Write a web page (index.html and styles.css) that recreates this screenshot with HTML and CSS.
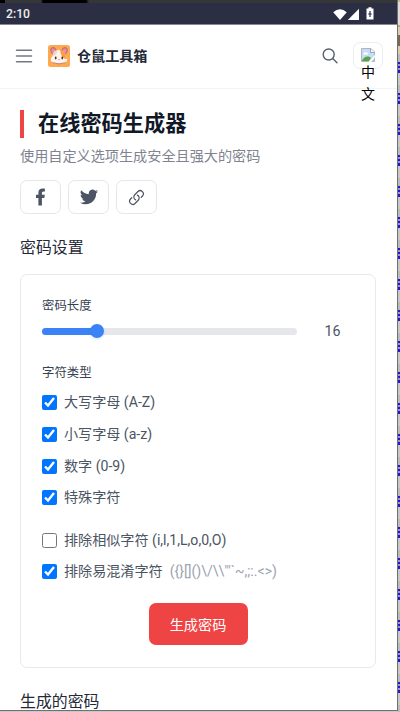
FILE: index.html
```html
<!DOCTYPE html>
<html lang="zh-CN">
<head>
<meta charset="utf-8">
<title>在线密码生成器</title>
<link rel="stylesheet" href="styles.css">
</head>
<body>
<div class="desktop">
<div class="phone">
  <div class="bezel"></div>
  <div class="status">
    <span>2:10</span>
    <svg class="status-icons" width="42" height="16" viewBox="0 0 42 16" fill="#fff">
      <path d="M0.2 5.2Q7 -.8 13.8 5.2L7 13Z"/>
      <path d="M26 1.8V13H14.8Z"/>
      <path d="M34 .7h3v1.3h2v11h-7V2h2Z" transform="translate(1.500 -.5)"/>
      <path d="M37 4v6M35.200 7h3.6" stroke="#2c2e44" stroke-width="1.2"/>
    </svg>
  </div>
  <header class="header">
    <svg class="menu" width="18" height="14" viewBox="0 0 18 14" fill="none" stroke="#727985" stroke-width="1.5" stroke-linecap="round"><path d="M1.5 1.2h15M1.5 7h15M1.5 12.800h15"/></svg>
    <svg class="logo" width="22" height="22" viewBox="0 0 22 22">
      <rect width="22" height="22" rx="2.5" fill="#ffa84f"/>
      <ellipse cx="5.7" cy="6" rx="3.2" ry="4" fill="#b5757c" transform="rotate(-25 5.7 6)"/>
      <ellipse cx="16.3" cy="6" rx="3.2" ry="4" fill="#b5757c" transform="rotate(25 16.3 6)"/>
      <ellipse cx="5.8" cy="6.3" rx="2" ry="3" fill="#f48b9c" transform="rotate(-25 5.8 6.3)"/>
      <ellipse cx="16.2" cy="6.3" rx="2" ry="3" fill="#f48b9c" transform="rotate(25 16.2 6.3)"/>
      <path d="M11 5C6 5 5 9 4.5 11 2.5 13 2 15.5 4 17.3c3 2 11 2 14 0 2-1.8 1.5-4.3-.5-6.300C17 9 16 5 11 5Z" fill="#fff5ec"/>
      <path d="M12 5c4 .1 5 3.500 5.500 6 .9 1 1.300 2 1.300 3-2.800 0-5.800-2-6.800-9Z" fill="#ff9c3c"/>
      <path d="M4.500 11C5 8 6.500 5.500 9.500 5.100 9.500 8 8 11 4.500 11Z" fill="#eed8ca"/>
      <ellipse cx="7.700" cy="13" rx=".9" ry="1.400" fill="#483139"/>
      <ellipse cx="14.300" cy="13" rx=".9" ry="1.400" fill="#483139"/>
      <path d="M10 14.300h2l-1 1.200Z" fill="#e95f73"/>
      <path d="M4.500 17.700q6.500 2.300 13 0" fill="none" stroke="#a66b68" stroke-width=".8"/>
    </svg>
    <span class="brand">仓鼠工具箱</span>
    <svg class="search" width="16" height="16" viewBox="0 0 16 16" fill="none" stroke="#556070" stroke-width="1.400" stroke-linecap="round"><circle cx="6.700" cy="6.500" r="5.500"/><path d="m10.700 10.500 4.300 4.300"/></svg>
    <div class="lang">
      <svg width="14" height="14" viewBox="0 0 14 14">
        <path d="M.5.500h9.500l3.500 3.500v9.500H.5Z" fill="#c7dcf9" stroke="#b1b5b9"/>
        <path d="M2.500 5.500q1-2.500 3-1 2 0 1.500 2h-5Z" fill="#fff"/>
        <path d="M1 13c1-4 6-6 9-3l-2 3Z" fill="#55a73f"/>
        <path d="M9.500.500V4.500h4" fill="#f4f5f7" stroke="#9da3a8"/>
        <path d="M7.500 14 14 7v2l-4 5Z" fill="#fff"/><path d="m11 14 3-4v4Z" fill="#b4bdc6"/>
      </svg>
      <span>中</span><span>文</span>
    </div>
  </header>
  <main class="content">
    <h1>在线密码生成器</h1>
    <p class="intro">使用自定义选项生成安全且强大的密码</p>
    <div class="shares">
      <a class="share"><svg width="18" height="18" viewBox="0 0 18 18" fill="#4b5563"><path d="M6.400 17.500V10.100H4V6.800h2.400V4.500C6.400 1.900 8 .500 10.700.500c1.100 0 2.200.2 2.200.2v2.700h-1.400c-1.300 0-1.600.8-1.600 1.600v1.800h2.900l-.5 3.300H9.900v7.400Z"/></svg></a>
      <a class="share"><svg width="18" height="18" viewBox="0 0 24 24" fill="#4b5563"><path d="M23.950 4.570a10 10 0 0 1-2.820.770 4.960 4.960 0 0 0 2.160-2.720c-.950.550-2 .950-3.120 1.180a4.920 4.920 0 0 0-8.380 4.480C7.690 8.090 4.070 6.130 1.640 3.160a4.920 4.920 0 0 0 1.520 6.570 4.900 4.900 0 0 1-2.230-.610v.060a4.920 4.920 0 0 0 3.950 4.830 5 5 0 0 1-2.210.080 4.940 4.940 0 0 0 4.600 3.420A9.870 9.870 0 0 1 0 19.540 13.990 13.990 0 0 0 7.550 21.750c9.050 0 14-7.500 14-13.980 0-.210 0-.420-.010-.630a9.940 9.940 0 0 0 2.410-2.570Z"/></svg></a>
      <a class="share"><svg width="17" height="17" viewBox="0 0 24 24" fill="none" stroke="#4b5563" stroke-width="1.700" stroke-linecap="round" stroke-linejoin="round"><path d="M13.190 8.690a4.500 4.500 0 0 1 1.240 7.240l-4.500 4.500a4.500 4.500 0 0 1-6.360-6.360l1.750-1.760m13.360-.620 1.750-1.760a4.500 4.500 0 0 0-6.360-6.360l-4.500 4.500a4.500 4.500 0 0 0 1.240 7.240"/></svg></a>
    </div>
    <h2>密码设置</h2>
    <section class="card">
      <div class="label">密码长度</div>
      <div class="range"><div class="track"><div class="fill"></div><div class="thumb"></div></div><span class="value">16</span></div>
      <div class="label types">字符类型</div>
      <div class="options">
        <label><input type="checkbox" checked>大写字母 (A-Z)</label>
        <label><input type="checkbox" checked>小写字母 (a-z)</label>
        <label><input type="checkbox" checked>数字 (0-9)</label>
        <label><input type="checkbox" checked>特殊字符</label>
      </div>
      <div class="options exclude">
        <label><input type="checkbox">排除相似字符 (i,l,1,L,o,0,O)</label>
        <label><input type="checkbox" checked>排除易混淆字符<span class="symbols">({}[]()\/\\'"`~,;:.&lt;&gt;)</span></label>
      </div>
      <button class="generate">生成密码</button>
    </section>
    <h2 class="result">生成的密码</h2>
  </main>
</div>
<div class="strip"></div>
</div>
</body>
</html>
```
FILE: styles.css
```css
* { box-sizing: border-box; }
body { margin: 0; font-family: Roboto, "Noto Sans CJK SC", sans-serif; }
.desktop { display: flex; width: 400px; height: 712px; overflow: hidden; background: #c8c8c8; }
.phone { width: 398px; height: 711px; overflow: hidden; background: #fff; border-right: 1px solid #707073; border-bottom: 1px solid #707073; }
.bezel { height: 3px; background: linear-gradient(90deg, #000 5px, #353638 5px 41px, #000 43px 86px, #353638 89px); }
.status { display: flex; justify-content: space-between; height: 22px; padding: 0 22px 0 6px; background: #2c2e44; border-bottom: 1px solid #888795; color: #eee; font-size: 12.2px; font-weight: 500; line-height: 23px; }
.status-icons { margin-top: 4px; }
.header { display: flex; align-items: center; height: 64px; padding: 0 14px 2px 15px; border-bottom: 1px solid #f3f4f6; }
.menu { flex: none; }
.logo { margin-left: 15px; flex: none; }
.brand { margin-left: 7px; color: #1f2937; font-size: 14.1px; font-weight: 700; line-height: 20px; }
.search { margin-left: auto; margin-right: 15px; flex: none; }
.lang { display: flex; flex-direction: column; align-items: center; width: 30px; height: 27px; padding-top: 5px; border: 1px solid #edeef0; border-radius: 7px; color: #000; font-size: 14px; line-height: 21.5px; }
.lang svg { flex: none; }
.content { padding: 21px 21px 0 20px; }
h1 { margin: 0; height: 28px; padding-left: 14px; border-left: 4px solid #ef4444; color: #111827; font-size: 21.2px; font-weight: 700; line-height: 28px; }
.intro { margin: 8px 0 0; color: #808490; font-size: 14.15px; line-height: 21px; }
.shares { display: flex; gap: 7px; margin-top: 13px; }
.share { display: flex; align-items: center; justify-content: center; width: 41px; height: 34px; border: 1px solid #e5e7eb; border-radius: 7px; }
h2 { margin: 21px 0 0; color: #1f2937; font-size: 15.9px; font-weight: 400; line-height: 26px; }
.card { height: 394px; margin-top: 13px; padding: 21px; border: 1px solid #e8e9ed; border-radius: 7px; }
.label { color: #374151; font-size: 12.4px; line-height: 19px; }
.range { display: flex; align-items: center; height: 17px; margin-top: 8px; }
.track { position: relative; width: 255px; height: 7px; border-radius: 4px; background: #e5e7eb; }
.fill { width: 55px; height: 7px; border-radius: 4px; background: #3b82f6; }
.thumb { position: absolute; left: 48px; top: -4px; width: 14px; height: 14px; border-radius: 50%; background: #3b82f6; box-shadow: 0 1px 3px #3b82f633; }
.value { margin-left: 27.5px; color: #4b5563; font-size: 14.2px; line-height: 17px; }
.types { margin-top: 23px; }
.options { display: grid; grid-auto-rows: 21px; gap: 10.8px; margin-top: 10px; }
.options label { display: flex; align-items: center; color: #4b5563; font-size: 14.1px; line-height: 21px; white-space: nowrap; }
input { width: 15px; height: 15px; margin: 0 7px 0 0; }
.exclude { margin-top: 21.3px; }
.symbols { margin-left: 7px; color: #9ca3af; }
.generate { display: block; width: 99px; height: 42px; margin: 21px auto 0; padding: 0; border: 0; border-radius: 7px; background: #ef4444; color: #fff; font: 14.15px Roboto, "Noto Sans CJK SC", sans-serif; }
.result { margin-top: 21px; }
.strip { width: 2px; height: 712px; background: linear-gradient(#c6b98e 0 2px, #ddd 2px 25px, #bfa66b 25px 27px, #d9cfae 27px 35px, #756b55 35px 46px, #d9cfae 46px 54px, transparent 54px), repeating-linear-gradient(#b9bdb9 0 8px, #2018d8 8px 10px, #9b98c8 10px 12px, #2018d8 12px 14px, #9b98c8 14px 16px, #2018d8 16px 19px, #c8c8c8 19px 31px) 0 54px; }
```
